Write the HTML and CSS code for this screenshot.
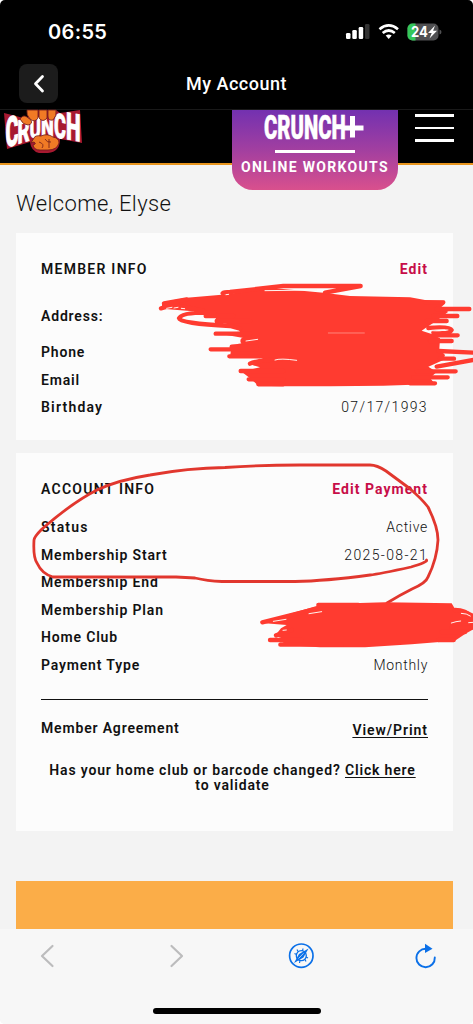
FILE: index.html
```html
<!DOCTYPE html>
<html lang="en">
<head>
<meta charset="utf-8">
<title>My Account</title>
<link rel="stylesheet" href="styles.css">
</head>
<body>
<div class="screen">
  <header class="status-bar">
    <span class="clock">06:55</span>
    <svg class="status-icons" width="97" height="20" viewBox="0 0 97 20">
      <g fill="#fff"><rect x="1" y="12" width="4.500" height="6" rx="1.300"/><rect x="7.300" y="9" width="4.500" height="9" rx="1.300"/><rect x="13.700" y="6" width="4.500" height="12" rx="1.300"/></g>
      <rect x="20" y="3" width="4.500" height="15" rx="1.300" fill="#333"/>
      <g fill="none" stroke="#fff" stroke-width="2.700"><path d="M34.500 8.300Q43.700 .600 53 8.300"/><path d="M37.700 12Q43.700 7 49.800 12"/></g>
      <path d="M40.700 14.600Q43.700 12.300 46.700 14.600L43.700 18Z" fill="#fff"/>
      <clipPath id="cell"><rect x="62.500" y="2.500" width="31" height="17" rx="5"/></clipPath>
      <g clip-path="url(#cell)"><rect x="62" y="2" width="32" height="18" fill="#505052"/><rect x="62" y="2" width="8.500" height="18" fill="#34c759"/></g>
      <path d="M94.500 8.500q2 .5 2 2.500t-2 2.500z" fill="#505052"/>
      <text class="battery-level" x="66" y="16.300" textLength="17" lengthAdjust="spacingAndGlyphs">24</text>
      <path d="M90 4.500L83 12h3.700L84.500 17.500L92 9.800h-3.900Z" fill="#fff"/>
    </svg>
  </header>
  <nav class="title-bar">
    <button class="back" aria-label="Back"><svg width="39" height="39" viewBox="0 0 39 39"><path d="M23.500 12.500L16.500 19.800L23.500 27" fill="none" stroke="#fff" stroke-width="2.800" stroke-linecap="round" stroke-linejoin="round"/></svg></button>
    <h1 class="title">My Account</h1>
  </nav>
  <main class="page">
    <div class="site-header">
      <svg class="logo" width="90" height="46" viewBox="0 0 90 46">
        <path d="M4 3L16 6L27 9L30 0H56L60 3L80 0L82 33L60 29Q60 42 48 43H39Q31 41 30 32L7 39Z" fill="#a71930"/>
        <g class="logo-letters">
          <text transform="translate(5.500 37.500) skewY(-14) scale(.76 1.600)">C</text>
          <text transform="translate(17.500 34) skewY(-16) scale(.72 1.250)">R</text>
          <text transform="translate(29.500 28.500) skewY(-8) scale(.66 1.080)">U</text>
          <text transform="translate(41 25.500) skewY(10) scale(.7 1.080)">N</text>
          <text transform="translate(54 27) skewY(10) scale(.7 1.300)">C</text>
          <text transform="translate(66 29) skewY(10) scale(.8 1.450)">H</text>
        </g>
        <g fill="#f07a25" stroke="#6c1a1a" stroke-width=".8">
          <path d="M20 9Q23 4 27 7L31 10Q33 14 28 15Q23 15 20 9Z"/>
          <path d="M27 0H38V8Q35 13 30 9Q26 5 27 0Z"/>
          <path d="M39 0H47V8Q43 13 39 8Z"/>
          <path d="M48 0H56Q57 6 53 10Q48 11 48 6Z"/>
          <path d="M34 28Q35 25 41 26Q47 23 53 27Q59 28 59 33Q57 40 48 40H40Q34 40 33 35Q37 34 34 32L31 33Z"/>
          <path d="M39 32Q45 34 42 38M45 29Q47 33 51 32M49 29V38" fill="none"/>
        </g>
      </svg>
      <div class="promo">
        <svg class="promo-name" width="102" height="33" viewBox="0 0 102 33">
          <text class="promo-word" transform="translate(0 27.500) scale(.535 1)" textLength="153" lengthAdjust="spacingAndGlyphs">CRUNCH</text>
          <path d="M79 14.500H99.500V19.500H79ZM86 5H91V26.500H86Z" fill="#fff"/>
        </svg>
        <span class="promo-rule"></span>
        <span class="promo-sub">ONLINE WORKOUTS</span>
      </div>
      <div class="menu"><span></span><span></span><span></span></div>
    </div>
    <h2 class="welcome">Welcome, Elyse</h2>
    <section class="card member">
      <div class="row"><b class="caps">MEMBER INFO</b><a class="edit">Edit</a></div>
      <div class="row address"><b>Address:</b></div>
      <div class="row"><b>Phone</b></div>
      <div class="row"><b>Email</b></div>
      <div class="row"><b class="wide">Birthday</b><span class="date birth">07/17/1993</span></div>
    </section>
    <section class="card account">
      <div class="row heading"><b class="caps">ACCOUNT INFO</b><a class="edit">Edit Payment</a></div>
      <div class="row"><b class="wide">Status</b><span>Active</span></div>
      <div class="row"><b>Membership Start</b><span class="date">2025-08-21</span></div>
      <div class="row"><b>Membership End</b></div>
      <div class="row"><b>Membership Plan</b></div>
      <div class="row"><b>Home Club</b></div>
      <div class="row"><b>Payment Type</b><span>Monthly</span></div>
      <div class="divider"></div>
      <div class="row agreement"><b>Member Agreement</b><a class="print">View/Print</a></div>
      <p class="note">Has your home club or barcode changed? <a>Click here</a><br>to validate</p>
    </section>
    <div class="banner"></div>
  </main>
  <footer class="browser-bar">
    <svg width="473" height="60" viewBox="0 929 473 60" fill="none">
      <g stroke="#bcbcbd" stroke-width="2.200" stroke-linecap="round" stroke-linejoin="round"><path d="M52.500 946L42 956L52.500 966"/><path d="M171.500 946L182 956L171.500 966"/></g>
      <g stroke="#0b70e8"><circle cx="301.300" cy="955.700" r="11.700" stroke-width="1.700"/><circle cx="301.300" cy="955.700" r="5" stroke-width="1.300"/><path d="M297 949.500l1 2M303 948.500l-.5 2.500M294.500 953.500l2 1M306 957l2 1M300 960.500l-.5 2.500M305 959.500l1 2" stroke-width="1.200"/></g>
      <path d="M308.500 948.500L303.500 957.500L294 963L299 954Z" fill="#0b70e8"/><path d="M298.500 958.500l5-5.200" stroke="#f7f7f7" stroke-width=".7"/>
      <path d="M426 948.800A9.200 9.200 0 1 0 434.800 957.500" stroke="#0b70e8" stroke-width="1.900" stroke-linecap="round"/><path d="M425 943.800V953L432.500 948.800Z" fill="#0b70e8"/>
    </svg>
    <span class="home-indicator"></span>
  </footer>
  <svg class="markup" width="473" height="1024" viewBox="0 0 473 1024">
    <g transform="translate(150 270) scale(.33333)">
      <path class="blot" d="M36 100L60 92L110 83L215 74L350 57L400 57L520 68L600 78L780 82L825 90L884 92L884 102L870 115L895 125L860 152L830 172L815 182L845 192L870 205L868 238L885 255L880 270L835 290L860 306L840 324L855 342L700 347L540 349L400 349L325 347L300 325L275 305L330 292L300 283L305 275L340 265L240 262L245 225L275 220L285 205L200 190L270 185L260 170L200 153L192 128L110 122L36 116Z"/>
      <g class="strokes">
        <path d="M218 70Q222 66 240 66L400 48H632L525 68"/>
        <path d="M42 100L110 88M33 115L70 105L160 122M192 128Q95 125 87 145Q89 160 240 168L270 176M167 138H250M200 153H300M197 191H300M182 238H320M245 230H320M238 259H330M272 303H400M296 328H400M325 343H400"/>
        <path d="M280 218Q270 206 300 205M300 281Q320 270 420 266M825 97H880M860 117H958M850 138H922M830 153H890M835 174Q900 168 905 180Q900 193 850 188M850 196H923M840 213H905M865 243L975 248M870 266H912M980 268L860 290M800 304H917M790 322H893M780 340H855"/>
      </g>
      <g class="gaps"><path d="M50 115l16-3M72 114l12-2M94 115l10 1M228 74l8-1M345 62L500 60M375 270q15-6 65 1M845 182q28 2 38 -2M288 213l35-5"/><path d="M535 189h108" stroke-opacity=".4"/></g>
    </g>
    <path class="circle" d="M426.500 560Q428 562 411 567Q379 574 370 575Q325 581 295 581.500H222Q207 581 195 578L176 577H53Q42 574 37 563Q33 557 34 540Q34 537 42 529Q73 502 97 490Q118 480 150 475Q188 468 225 467.500Q260 465 300 465H370Q377 465 386 471L409 488Q421 498 428 507Q438 527 438 540Q437 559 428 577Q426 583 412 589Q400 595 387 603"/>
    <g transform="translate(225 450) scale(.33333)">
      <path class="blot" d="M112 515L275 468L280 463L480 457L680 460L690 477L720 480L748 492V536L720 552L690 572L560 583L420 592H285L165 584L185 570L150 557L168 535L185 525L120 520Z"/>
      <path class="strokes" d="M112 517L270 477M135 570H230M153 556L200 540M166 584H350M280 465H400M690 480Q730 480 745 510M680 532H750M650 546L720 546M640 570H686"/>
      <path class="gaps" d="M145 514l38-6M252 491l38-6M174 541l10-1M709 490q16 0 27 8M679 519q14-5 28-6M731 518l14-1"/>
    </g>
  </svg>
</div>
</body>
</html>
```
FILE: styles.css
```css
* { box-sizing: border-box; }
body { margin: 0; background: #fff; font-family: Roboto, "Noto Sans", sans-serif; color: #111; }
.screen { position: relative; width: 473px; height: 1024px; overflow: hidden; display: flex; flex-direction: column; background: #f3f3f3; border-radius: 5px; }
.status-bar { height: 58px; background: #000; display: flex; justify-content: space-between; padding: 20.500px 31.500px 0 48px; }
.clock { color: #fff; font: 600 20px/22px Inter, sans-serif; letter-spacing: .35px; }
.battery-level { fill: #fff; font: 700 15px Inter, sans-serif; }
.title-bar { height: 52px; background: #000; display: grid; grid-template-columns: 58px 1fr 58px; border-bottom: 1px solid #191919; }
.back { margin: 6px 0 0 19px; padding: 0; width: 39px; height: 39px; border: 0; border-radius: 8px; background: #1c1c1c; }
.back svg { display: block; }
.title { margin: 14px 0 0; color: #fff; text-align: center; font: 500 18px/24px Roboto, sans-serif; letter-spacing: .5px; }
.page { height: 819px; padding: 0 20px 0 16px; }
.site-header { height: 55px; margin: 0 -20px 0 -16px; background: #000; border-bottom: 2px solid #e8951e; display: flex; align-items: flex-start; }
.logo { width: 90px; flex: none; overflow: visible; }
.logo-letters { font: 900 26px Roboto, sans-serif; fill: #fff; stroke: #fff; stroke-width: .6; }
.promo { width: 166px; height: 80px; flex: none; margin-left: 141.500px; border-radius: 0 0 21px 21px; background: linear-gradient(#7331b0, #a23fa0 50%, #d9508d); display: flex; flex-direction: column; align-items: center; z-index: 1; }
.promo-name { margin: 1px 0 0; flex: none; overflow: visible; }
.promo-word { font: 900 34px/34px Roboto, sans-serif; fill: #fff; stroke: #fff; stroke-width: .5; }
.promo-rule { width: 80px; height: 2.500px; margin-top: 6px; background: #fff; }
.promo-sub { margin: 5px 0 0 1px; color: #fff; font: 700 14px/18px Roboto, sans-serif; letter-spacing: 1.320px; white-space: nowrap; }
.menu { margin: 4px 0 0 17px; width: 39px; display: grid; gap: 10px; }
.menu span { height: 2.500px; background: #fff; }
.welcome { margin: 24px 0 15px; font: 300 22px/29px Roboto, sans-serif; letter-spacing: .35px; }
.card { background: #fcfcfc; padding: 22px 25px 0; font-size: 14px; }
.member { height: 207px; }
.account { height: 378px; margin-top: 13px; }
.row { height: 27.500px; display: flex; align-items: center; justify-content: space-between; white-space: nowrap; }
.row b, .note { font-weight: 600; letter-spacing: .83px; }
.row .caps { letter-spacing: 1.260px; }
.row .wide { letter-spacing: 1.200px; }
.row span { font-weight: 300; letter-spacing: .7px; }
.row .date { letter-spacing: 1.350px; }
.row .birth { letter-spacing: 1.350px; }
.address { margin: 20px 0 8.500px; }
.heading { margin-bottom: 11px; }
.edit { color: #c70d48; font-weight: 700; letter-spacing: 1.040px; }
.divider { height: 1px; margin: 20.500px 0 14px; background: #111; }
.print { margin-top: 5px; font-weight: 600; letter-spacing: .95px; text-decoration: underline; text-underline-offset: 2px; }
.note { margin: 21px -8px 0 -12px; line-height: 15px; text-align: center; white-space: nowrap; }
.note a { text-decoration: underline; text-underline-offset: 2px; }
.banner { height: 48px; margin-top: 50px; background: #fbad48; }
.browser-bar { height: 95px; background: #f7f7f7; display: flex; flex-direction: column; align-items: center; }
.home-indicator { width: 168px; height: 6px; margin-top: 19px; border-radius: 3px; background: #000; }
.markup { position: absolute; inset: 0; z-index: 2; fill: none; stroke-linecap: round; stroke-linejoin: round; }
.blot { fill: #ff3b30; }
.strokes { stroke: #ff3b30; stroke-width: 13; }
.gaps { stroke: #fff4f0; stroke-width: 3; }
.circle { stroke: #e1372e; stroke-width: 2.800; }
```
